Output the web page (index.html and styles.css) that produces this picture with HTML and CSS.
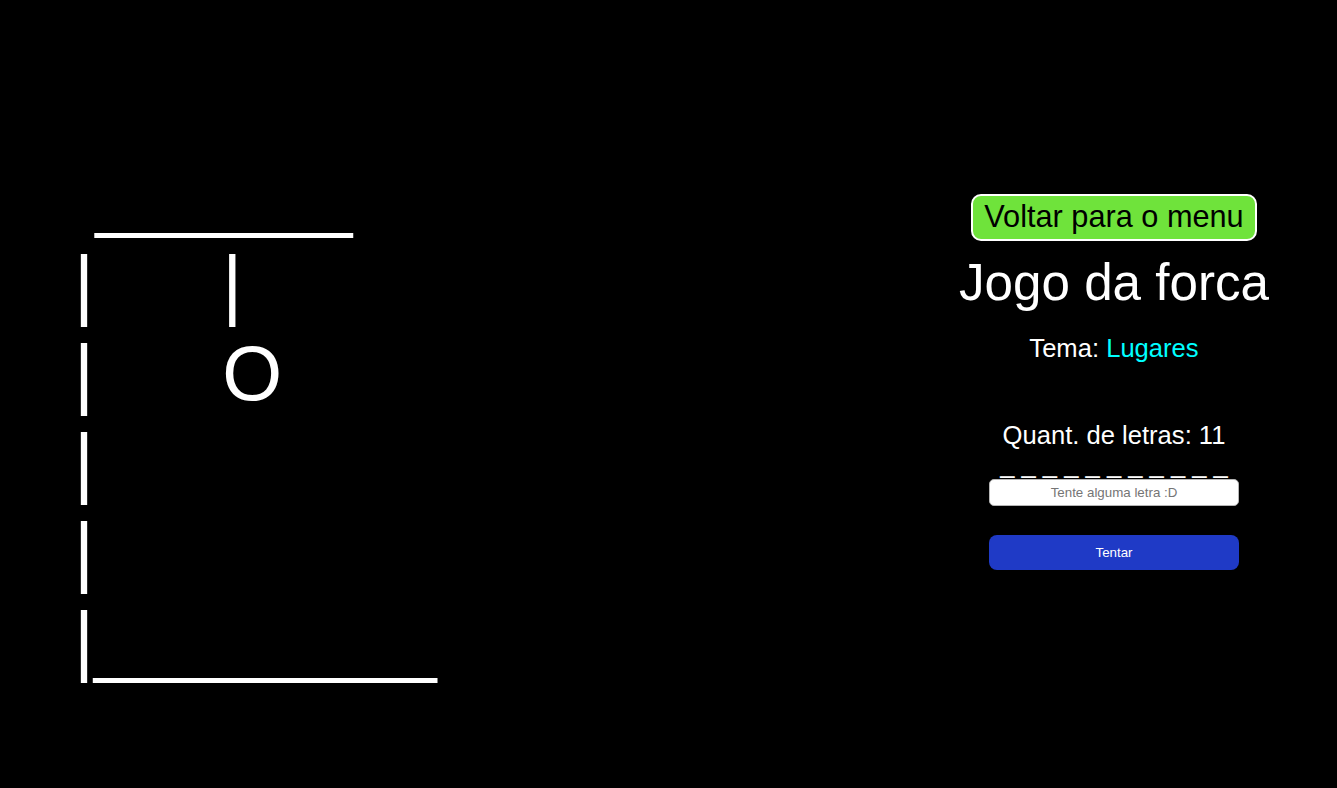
FILE: index.html
```html
<!DOCTYPE html>
<html lang="pt">
<head>
<meta charset="utf-8">
<title>Jogo da forca</title>
<link rel="stylesheet" href="styles.css">
</head>
<body>
<main class="page">
  <div class="gallows"><div class="row"> ______</div><div class="row">|      |</div><div class="row">|      O</div><div class="row">|</div><div class="row">|</div><div class="row">|________</div></div>
  <section class="panel">
    <button class="back-btn" type="button">Voltar para o menu</button>
    <h1 class="title">Jogo da forca</h1>
    <p class="theme">Tema: <span class="theme-name">Lugares</span></p>
    <p class="count">Quant. de letras: 11</p>
    <p class="word">_ _ _ _ _ _ _ _ _ _ _</p>
    <input class="guess" type="text" placeholder="Tente alguma letra :D">
    <button class="try-btn" type="button">Tentar</button>
  </section>
</main>
</body>
</html>
```
FILE: styles.css
```css
html, body {
  margin: 0;
  padding: 0;
  background: #000;
  color: #fff;
  font-family: "Liberation Sans", Arial, sans-serif;
}

.page {
  display: flex;
  justify-content: space-between;
  align-items: flex-start;
  height: 788px;
  overflow: hidden;
}

.gallows {
  margin-top: 151px;
  margin-left: 74px;
  font-size: 77px;
  line-height: normal;
  white-space: pre;
  color: #fff;
}

.row {
  height: 89px;
}

.panel {
  margin-top: 194px;
  margin-right: 48px;
  width: 350px;
  display: flex;
  flex-direction: column;
  align-items: center;
  text-align: center;
}

.back-btn {
  font-family: "Liberation Sans", Arial, sans-serif;
  font-size: 30.7px;
  color: #000;
  background: #6fe33b;
  border: 2px solid #fff;
  border-radius: 10px;
  padding: 3px 11px 4px;
  line-height: normal;
  margin: 0;
}

.title {
  font-size: 51.2px;
  font-weight: normal;
  margin: 12px 0 0;
  line-height: normal;
}

.theme {
  font-size: 25.6px;
  margin: 22px 0 0;
  line-height: normal;
}

.theme-name {
  color: #00ffff;
}

.count {
  font-size: 25.6px;
  margin: 58px 0 0;
  line-height: normal;
}

.word {
  font-size: 25.6px;
  margin: 0;
  line-height: 29px;
  height: 29px;
}

.guess {
  box-sizing: border-box;
  width: 250px;
  height: 27px;
  margin: 0;
  border: 1px solid #b5b5b5;
  border-radius: 5px;
  background: #fff;
  font-family: "Liberation Sans", Arial, sans-serif;
  font-size: 13.33px;
  text-align: center;
  padding: 0 4px;
}

.guess::placeholder {
  color: #757575;
}

.try-btn {
  margin-top: 29px;
  width: 250px;
  height: 35px;
  border: none;
  border-radius: 8px;
  background: #1f3ac6;
  color: #fff;
  font-family: "Liberation Sans", Arial, sans-serif;
  font-size: 13.33px;
}
```
